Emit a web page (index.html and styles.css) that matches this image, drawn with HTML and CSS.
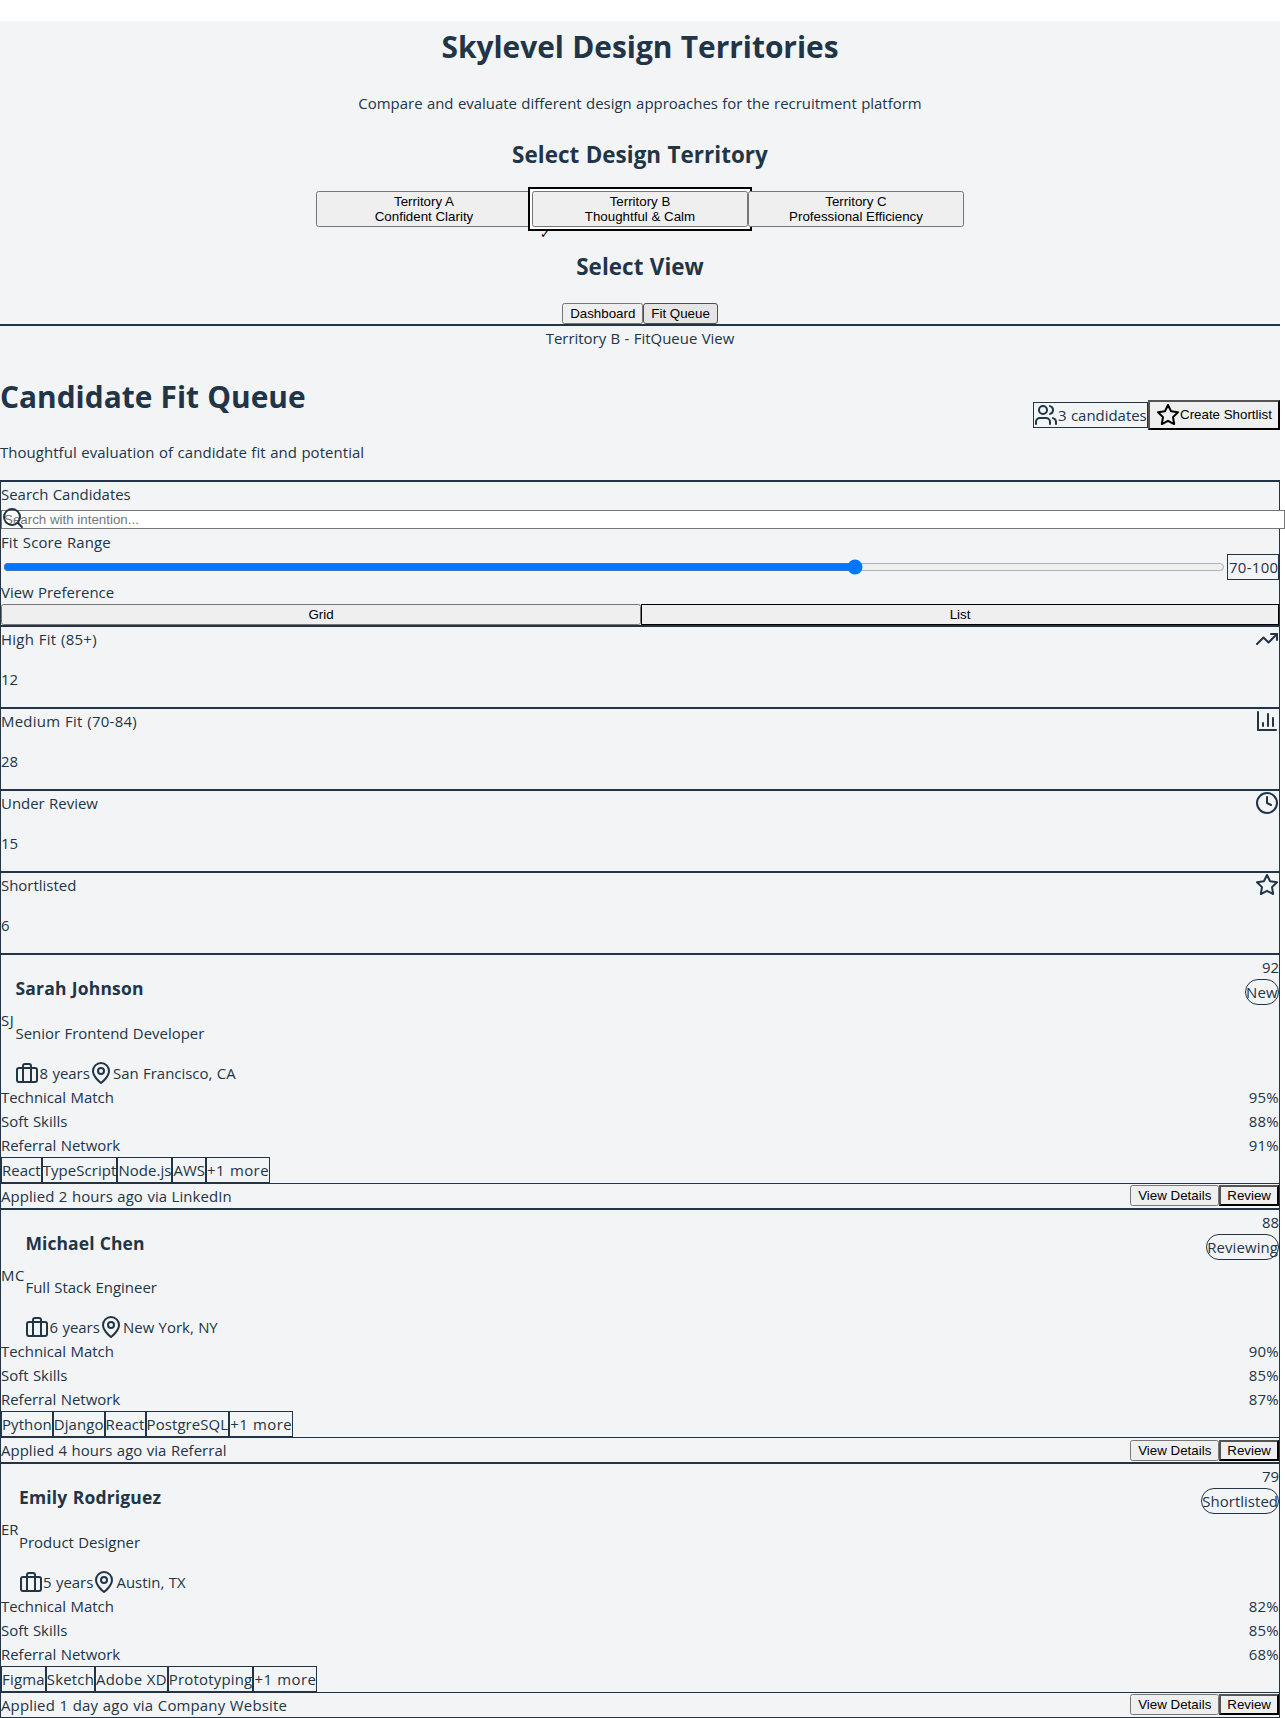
FILE: index.html
```html
<!DOCTYPE html>
<html lang="en">
<head>
<meta charset="utf-8">
<title>Skylevel Design Territories</title>
<link rel="stylesheet" href="styles.css">
</head>
<body>
<svg width="0" height="0" class="sprite" aria-hidden="true">
  <symbol id="users" viewBox="0 0 24 24"><path d="M16 21v-2a4 4 0 0 0-4-4H6a4 4 0 0 0-4 4v2"/><circle cx="9" cy="7" r="4"/><path d="M22 21v-2a4 4 0 0 0-3-3.87"/><path d="M16 3.13a4 4 0 0 1 0 7.75"/></symbol>
  <symbol id="star" viewBox="0 0 24 24"><polygon points="12 2 15.09 8.26 22 9.27 17 14.14 18.18 21.02 12 17.77 5.82 21.02 7 14.14 2 9.27 8.91 8.26 12 2"/></symbol>
  <symbol id="search" viewBox="0 0 24 24"><circle cx="11" cy="11" r="8"/><path d="m21 21-4.3-4.3"/></symbol>
  <symbol id="trend" viewBox="0 0 24 24"><polyline points="22 7 13.5 15.5 8.5 10.5 2 17"/><polyline points="16 7 22 7 22 13"/></symbol>
  <symbol id="chart" viewBox="0 0 24 24"><path d="M3 3v18h18"/><path d="M18 17V9"/><path d="M13 17V5"/><path d="M8 17v-3"/></symbol>
  <symbol id="clock" viewBox="0 0 24 24"><circle cx="12" cy="12" r="10"/><polyline points="12 6 12 12 16 14"/></symbol>
  <symbol id="case" viewBox="0 0 24 24"><rect x="2" y="7" width="20" height="14" rx="2"/><path d="M16 21V5a2 2 0 0 0-2-2h-4a2 2 0 0 0-2 2v16"/></symbol>
  <symbol id="pin" viewBox="0 0 24 24"><path d="M20 10c0 6-8 12-8 12s-8-6-8-12a8 8 0 0 1 16 0Z"/><circle cx="12" cy="10" r="3"/></symbol>
</svg>
<div class="page">
  <header class="intro">
    <h1 class="title">Skylevel Design Territories</h1>
    <p class="lead">Compare and evaluate different design approaches for the recruitment platform</p>
    <h2>Select Design Territory</h2>
    <div class="territories">
      <button>Territory A<br>Confident Clarity</button>
      <button class="ring">Territory B<br>Thoughtful &amp; Calm</button>
      <button>Territory C<br>Professional Efficiency</button>
      <span class="check">✓</span>
    </div>
    <h2>Select View</h2>
    <div class="views"><button>Dashboard</button><button class="current">Fit Queue</button></div>
  </header>
  <div class="crumb">Territory B - FitQueue View</div>
  <div class="queue-head">
    <div>
      <h1 class="queue-title">Candidate Fit Queue</h1>
      <p class="queue-lead">Thoughtful evaluation of candidate fit and potential</p>
    </div>
    <div class="actions">
      <div class="count"><svg class="icon"><use href="#users"/></svg><span>3 candidates</span></div>
      <button class="primary create"><svg class="icon"><use href="#star"/></svg>Create Shortlist</button>
    </div>
  </div>
  <section class="filters">
    <div>Search Candidates</div>
    <div class="search"><input type="text" placeholder="Search with intention..."><svg class="icon"><use href="#search"/></svg></div>
    <div class="range-label">Fit Score Range</div>
    <div class="range"><input type="range" min="0" max="100" value="70"><span class="range-value">70-100</span></div>
    <div>View Preference</div>
    <div class="toggle"><button>Grid</button><button class="on">List</button></div>
  </section>
  <section class="stat"><div><span class="band">High Fit (85+)</span><p>12</p></div><svg class="icon"><use href="#trend"/></svg></section>
  <section class="stat"><div><span class="band">Medium Fit (70-84)</span><p>28</p></div><svg class="icon"><use href="#chart"/></svg></section>
  <section class="stat"><div><span>Under Review</span><p>15</p></div><svg class="icon"><use href="#clock"/></svg></section>
  <section class="stat"><div><span>Shortlisted</span><p>6</p></div><svg class="icon"><use href="#star"/></svg></section>

  <article class="card sarah">
    <div class="top">
      <div class="who"><span class="avatar">SJ</span><div><h3>Sarah Johnson</h3><p>Senior Frontend Developer</p>
        <div class="meta"><svg class="icon"><use href="#case"/></svg><span class="years">8 years</span><svg class="icon"><use href="#pin"/></svg><span>San Francisco, CA</span></div></div></div>
      <div class="score"><span>92</span><span class="badge new">New</span></div>
    </div>
    <div class="row"><span>Technical Match</span><span class="percent">95%</span></div>
    <div class="row"><span>Soft Skills</span><span class="percent">88%</span></div>
    <div class="row"><span>Referral Network</span><span class="percent">91%</span></div>
    <div class="tags"><span>React</span><span>TypeScript</span><span>Node.js</span><span>AWS</span><span class="more">+1 more</span></div>
    <div class="foot"><span>Applied 2 hours ago via LinkedIn</span><div class="buttons"><button>View Details</button><button class="primary">Review</button></div></div>
  </article>

  <article class="card michael">
    <div class="top">
      <div class="who"><span class="avatar">MC</span><div><h3>Michael Chen</h3><p>Full Stack Engineer</p>
        <div class="meta"><svg class="icon"><use href="#case"/></svg><span class="years">6 years</span><svg class="icon"><use href="#pin"/></svg><span>New York, NY</span></div></div></div>
      <div class="score"><span>88</span><span class="badge reviewing">Reviewing</span></div>
    </div>
    <div class="row"><span>Technical Match</span><span class="percent">90%</span></div>
    <div class="row"><span>Soft Skills</span><span class="percent">85%</span></div>
    <div class="row"><span>Referral Network</span><span class="percent">87%</span></div>
    <div class="tags"><span>Python</span><span>Django</span><span>React</span><span>PostgreSQL</span><span class="more">+1 more</span></div>
    <div class="foot"><span>Applied 4 hours ago via Referral</span><div class="buttons"><button>View Details</button><button class="primary">Review</button></div></div>
  </article>

  <article class="card emily">
    <div class="top">
      <div class="who"><span class="avatar">ER</span><div><h3>Emily Rodriguez</h3><p>Product Designer</p>
        <div class="meta"><svg class="icon"><use href="#case"/></svg><span class="years">5 years</span><svg class="icon"><use href="#pin"/></svg><span>Austin, TX</span></div></div></div>
      <div class="score"><span>79</span><span class="badge shortlisted">Shortlisted</span></div>
    </div>
    <div class="row"><span>Technical Match</span><span class="percent">82%</span></div>
    <div class="row"><span>Soft Skills</span><span class="percent">85%</span></div>
    <div class="row"><span>Referral Network</span><span class="percent">68%</span></div>
    <div class="tags"><span>Figma</span><span>Sketch</span><span>Adobe XD</span><span>Prototyping</span><span class="more">+1 more</span></div>
    <div class="foot"><span>Applied 1 day ago via Company Website</span><div class="buttons"><button>View Details</button><button class="primary">Review</button></div></div>
  </article>
</div>
</body>
</html>
```
FILE: styles.css
```css
html { background: #fff; overflow: hidden; }
body {
  margin: 0;
  font-family: "Segoe UI", "Open Sans", "Noto Sans", sans-serif;
  font-size: 16px;
  font-size-adjust: 0.5;
  line-height: 1.5;
  word-spacing: 0.5px;
  color: #213547;
}
.sprite { position: absolute; }
.page { width: 1280px; margin-top: 21.44px; background: #f3f4f6; }
h1, h2 { box-sizing: border-box; }
h1 { font-size: 32px; height: 48px; padding-top: 2px; margin: 21.44px 0; }
h2 { font-size: 24px; height: 36px; padding-top: 2px; margin: 19.92px 0; letter-spacing: 0.05px; }
h3 { font-size: 18.72px; margin: 18.72px 0; white-space: nowrap; letter-spacing: 0.18px; }
p { margin: 16px 0; white-space: nowrap; }
button, input { font-family: "Liberation Sans", Arial, sans-serif; font-size: 13.333px; font-size-adjust: none; }
.icon { width: 24px; height: 24px; flex: none; fill: none; stroke: currentColor; stroke-width: 2; stroke-linecap: round; stroke-linejoin: round; }

.intro { text-align: center; border-bottom: 2px solid #213547; }
.intro .title { margin-top: 0; }
.territories { position: relative; display: grid; grid-template-columns: repeat(3, 1fr); width: 648px; margin: 0 auto; }
.ring { box-shadow: 0 0 0 2px #fff, 0 0 0 4px #000; }
.check { position: absolute; left: 224px; top: 34px; font-size: 13.333px; line-height: 18px; color: #000; }
.views { display: flex; justify-content: center; height: 21px; }
.current { padding: 2px 7px; background: #e5e5e5; border: 1px solid #4f4f4f; border-radius: 3px; }
.crumb { text-align: center; height: 24px; }

.queue-head { display: flex; justify-content: space-between; align-items: center; border-bottom: 1px solid #213547; }
.queue-lead { letter-spacing: 0.07px; }
.actions { display: flex; align-items: center; }
.count { display: flex; box-sizing: border-box; width: 115px; border: 1px solid #213547; white-space: nowrap; }
.primary { border: 2px outset #000; }
.create { display: flex; align-items: center; width: 132px; box-sizing: border-box; white-space: nowrap; }

.filters { border: 1px solid #213547; }
.search { position: relative; height: 24px; }
.search input { display: block; width: 100%; padding: 1px 2px; border: 1px solid #767676; position: relative; top: 4px; }
.search .icon { position: absolute; left: 0; top: 0; }
.range-label { letter-spacing: 0.15px; }
.range { display: flex; align-items: center; }
.range input { flex: 1; }
.range-value { box-sizing: border-box; width: 52px; padding-left: 1px; border: 1px solid #213547; white-space: nowrap; letter-spacing: 0.3px; }
.toggle { display: flex; height: 21px; }
.toggle button { flex: 1; }
.toggle .on { border: 1px solid #000; }

.stat { display: flex; justify-content: space-between; border: 1px solid #213547; }
.band { letter-spacing: 0.27px; }

.card { border: 1px solid #213547; }
.top, .row, .foot { display: flex; justify-content: space-between; }
.who { display: flex; align-items: center; }
.meta { display: flex; white-space: nowrap; }
.meta .icon { position: relative; left: -0.5px; }
.years { width: 49.5px; }
.avatar { letter-spacing: 0.6px; }
.sarah .avatar { width: 14.5px; }
.michael .avatar { width: 24.5px; }
.michael h3 { letter-spacing: 0.08px; }
.emily .avatar { width: 18px; letter-spacing: 0; }
.score { display: flex; flex-direction: column; align-items: flex-end; }
.badge { border: 1px solid #213547; border-radius: 13px; letter-spacing: 0.1px; }
.new { letter-spacing: 0.3px; }
.shortlisted { letter-spacing: 0.04px; }
.percent { letter-spacing: 0.3px; }
.tags { display: flex; letter-spacing: 0.07px; }
.tags span { border: 1px solid #213547; }
.tags .more { letter-spacing: 0.45px; }
.michael .tags { letter-spacing: 0.11px; }
.emily .tags { letter-spacing: 0.21px; }
.foot { align-items: center; border-top: 1px solid #213547; letter-spacing: 0.08px; }
.michael .foot { letter-spacing: 0.05px; }
.emily .foot { letter-spacing: 0.17px; }
.buttons { display: flex; }
```
